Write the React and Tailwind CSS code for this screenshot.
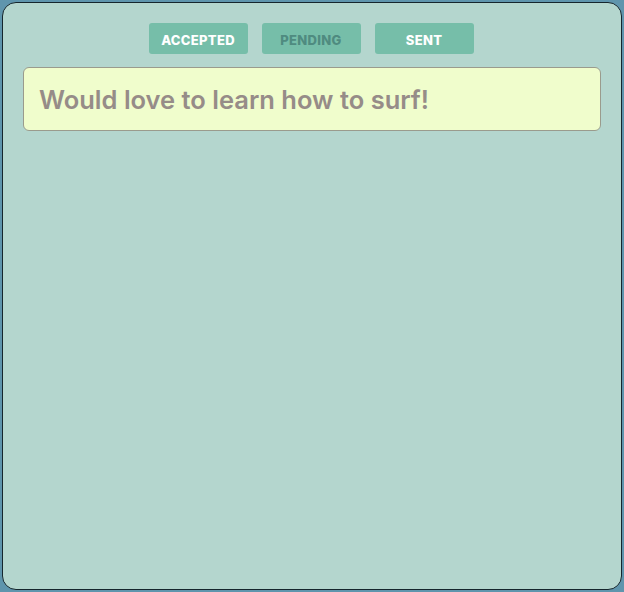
import React from "react";

const tabs = [
  { label: "ACCEPTED", active: true },
  { label: "PENDING", active: false },
  { label: "SENT", active: true },
];

export default function App() {
  return (
    <div className="w-[624px] h-[592px] bg-[#5f95ad] p-[2px]" style={{ fontFamily: "Inter, 'Liberation Sans', sans-serif" }}>
      <div className="w-[620px] h-[588px] rounded-[14px] border border-[#16262d] bg-[#b4d6ce] px-5 pt-5">
        {/* Tabs */}
        <div className="flex justify-center gap-[14px] pr-[2px]">
          {tabs.map((t) => (
            <button
              key={t.label}
              className={
                "w-[99px] h-[31px] pt-[4px] rounded-[3px] bg-[#76bea9] text-[13px] font-extrabold tracking-[0.3px] " +
                (t.active ? "text-white" : "text-[#4f8b80]")
              }
            >
              {t.label}
            </button>
          ))}
        </div>

        {/* Message card */}
        <div className="mt-[13px] h-[64px] rounded-[6px] border border-[#9a9b8d] bg-[#f0fdcc] flex items-center px-[15px] pt-[3px]">
          <span className="text-[25.5px] font-semibold text-[#968c88]">Would love to learn how to surf!</span>
        </div>
      </div>
    </div>
  );
}
